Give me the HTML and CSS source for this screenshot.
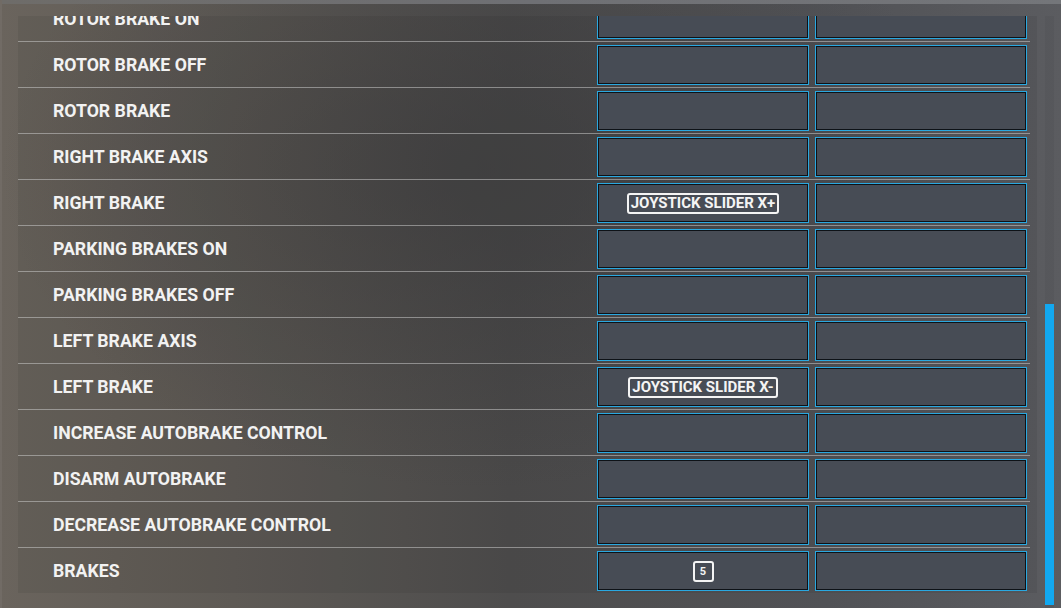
FILE: index.html
```html
<!DOCTYPE html>
<html>
<head>
<meta charset="utf-8">
<link rel="stylesheet" href="styles.css">
</head>
<body>
<div class="screen">
  <div class="topbar"></div>
  <div class="main">
    <div class="viewport">
      <div class="list">
        <div class="row"><div class="label">ROTOR BRAKE ON</div><div class="slot"></div><div class="slot"></div></div>
        <div class="row"><div class="label">ROTOR BRAKE OFF</div><div class="slot"></div><div class="slot"></div></div>
        <div class="row"><div class="label">ROTOR BRAKE</div><div class="slot"></div><div class="slot"></div></div>
        <div class="row"><div class="label">RIGHT BRAKE AXIS</div><div class="slot"></div><div class="slot"></div></div>
        <div class="row"><div class="label">RIGHT BRAKE</div><div class="slot"><span class="tag">JOYSTICK SLIDER X+</span></div><div class="slot"></div></div>
        <div class="row"><div class="label">PARKING BRAKES ON</div><div class="slot"></div><div class="slot"></div></div>
        <div class="row"><div class="label">PARKING BRAKES OFF</div><div class="slot"></div><div class="slot"></div></div>
        <div class="row"><div class="label">LEFT BRAKE AXIS</div><div class="slot"></div><div class="slot"></div></div>
        <div class="row"><div class="label">LEFT BRAKE</div><div class="slot"><span class="tag">JOYSTICK SLIDER X-</span></div><div class="slot"></div></div>
        <div class="row"><div class="label">INCREASE AUTOBRAKE CONTROL</div><div class="slot"></div><div class="slot"></div></div>
        <div class="row"><div class="label">DISARM AUTOBRAKE</div><div class="slot"></div><div class="slot"></div></div>
        <div class="row"><div class="label">DECREASE AUTOBRAKE CONTROL</div><div class="slot"></div><div class="slot"></div></div>
        <div class="row"><div class="label">BRAKES</div><div class="slot"><span class="tag key">5</span></div><div class="slot"></div></div>
      </div>
    </div>
    <div class="scroll"><div class="thumb"></div></div>
  </div>
</div>
</body>
</html>
```
FILE: styles.css
```css
html, body {
  margin: 0;
  padding: 0;
  width: 1061px;
  height: 608px;
  overflow: hidden;
}
body {
  font-family: Roboto, "Liberation Sans", sans-serif;
  color: #f2f2f2;
  background:
    radial-gradient(ellipse 480px 320px at 480px 170px, rgba(58,58,60,0.55), rgba(58,58,60,0) 100%),
    linear-gradient(90deg, #6a645d 0%, #5e5a55 22%, #4e4d4d 48%, #515256 78%, #5b5c60 100%);
}
.screen {
  display: flex;
  flex-direction: column;
  height: 608px;
  border-left: 2px solid rgba(255,255,255,0.05);
  box-sizing: border-box;
}
.topbar {
  height: 4px;
  background: linear-gradient(90deg, #6e6c69, #6f7074 50%, #74767a);
  flex: none;
}
.main {
  display: flex;
  padding: 12px 0 0 16px;
  flex: 1;
}
.viewport {
  width: 1019px;
  height: 577px;
  overflow: hidden;
  background: rgba(0,0,0,0.06);
  flex: none;
}
.list {
  margin-top: -21px;
  padding-right: 7px;
}
.row {
  display: flex;
  align-items: center;
  height: 46px;
  box-sizing: border-box;
  border-top: 1px solid rgba(200,200,200,0.55);
  padding: 3px 3px 2px 0;
}
.row:first-child {
  border-top-color: transparent;
}
.label {
  flex: 1;
  padding-left: 35px;
  font-size: 17.7px;
  font-weight: 700;
}
.slot {
  width: 212px;
  height: 40px;
  box-sizing: border-box;
  border: 1px solid #2aa8e0;
  box-shadow: inset 0 0 0 1px #0e1217;
  background: #474c55;
  margin-left: 6px;
  display: flex;
  align-items: center;
  justify-content: center;
}
.slot:first-of-type {
  margin-left: 0;
}
.tag {
  border: 2px solid #f4f4f4;
  border-radius: 3px;
  font-size: 15px;
  font-weight: 700;
  line-height: 17px;
  padding: 0 2px;
  color: #f4f4f4;
}
.tag.key {
  width: 21px;
  height: 21px;
  box-sizing: border-box;
  padding: 0;
  font-size: 11px;
  text-align: center;
  line-height: 17px;
}
.scroll {
  margin-left: 8px;
  width: 9px;
  align-self: stretch;
  background: rgba(0,0,0,0.04);
  display: flex;
  flex-direction: column;
  justify-content: flex-end;
}
.thumb {
  height: 301px;
  margin-bottom: 3px;
  background: #12a8f0;
}
```
